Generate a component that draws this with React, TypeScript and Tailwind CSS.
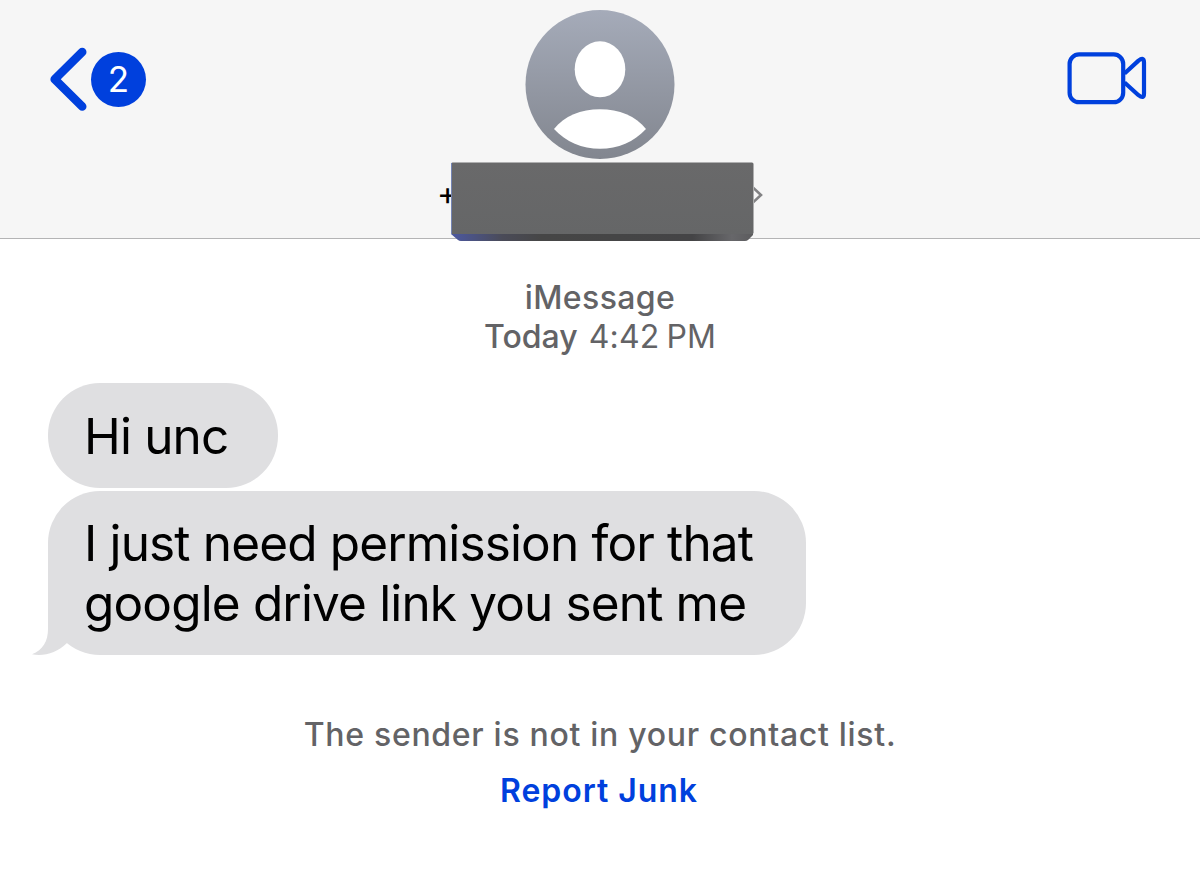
import type { ReactNode } from "react";

const BackIcon = () => (
    <svg width="38" height="64" viewBox="0 0 38 64" fill="none">
        <path
            d="M32.2 5 L4.7 32.2 L32.2 59.5"
            className="stroke-[#0040dd]"
            strokeWidth="8.6"
            strokeLinecap="round"
            strokeLinejoin="round"
        />
    </svg>
);

const VideoIcon = () => (
    <svg width="82" height="54" viewBox="0 0 82 54" fill="none">
        <g className="stroke-[#0040dd]" strokeWidth="4.2" strokeLinejoin="round">
            <rect x="3.6" y="3.4" width="53.6" height="47.8" rx="9.5" />
            <path d="M58.5 22.5 L72.5 9.6 Q78 5.5 78 11.5 V42.5 Q78 48.5 72.5 44.2 L58.5 31.5" />
        </g>
    </svg>
);

const Avatar = () => (
    <svg width="150" height="150" viewBox="0 0 150 150">
        <defs>
            <linearGradient id="avatar" x1="0" y1="0" x2="0" y2="1">
                <stop offset="0" stopColor="#a5abb9" />
                <stop offset="1" stopColor="#82868f" />
            </linearGradient>
        </defs>
        <circle cx="75" cy="75.5" r="74.5" fill="url(#avatar)" />
        <ellipse cx="75" cy="60.3" rx="25.3" ry="28" fill="#fff" />
        <path
            d="M29 120 C39 107 56 100.2 75 100.2 C94 100.2 111 107 121 120 C109 133 93 139.8 75 139.8 C57 139.8 41 133 29 120 Z"
            fill="#fff"
        />
    </svg>
);

// grey bar that hides the phone number
const HiddenNumber = () => (
    <svg width="304" height="80" viewBox="0 0 304 80">
        <defs>
            <linearGradient id="face" x1="0" y1="0" x2="0" y2="1">
                <stop offset="0" stopColor="#69696a" />
                <stop offset="1" stopColor="#656667" />
            </linearGradient>
            <linearGradient id="edge" x1="0" y1="0" x2="1" y2="0">
                <stop offset="0" stopColor="#4c58a0" />
                <stop offset="0.17" stopColor="#4a4b58" />
                <stop offset="0.3" stopColor="#464646" />
                <stop offset="0.8" stopColor="#444446" />
                <stop offset="0.93" stopColor="#67676a" />
                <stop offset="1" stopColor="#5c5c5e" />
            </linearGradient>
            <linearGradient id="rim" x1="0" y1="0" x2="1" y2="0">
                <stop offset="0" stopColor="#7080b8" />
                <stop offset="0.2" stopColor="#626266" />
                <stop offset="1" stopColor="#5c5c5c" />
            </linearGradient>
        </defs>
        <path d="M1 70 H303 V73 L298 78 Q297 79 295 79 H11 Q9 79 8 78 L1 72 Z" fill="url(#edge)" />
        <rect x="1" y="0.5" width="302.5" height="71.5" rx="1.5" fill="url(#face)" />
        <path d="M1.5 1 H303" stroke="url(#rim)" />
        <path d="M1.5 1 V72" stroke="#7484b4" />
    </svg>
);

const Tail = () => (
    <svg
        className="absolute -left-4 bottom-0"
        width="52"
        height="60"
        viewBox="0 0 52 60"
    >
        <path d="M16 0 V34 C16 46 11 55 0 59.3 C12 61.5 25 58 35 48 L51 20 V0 Z" fill="#dfdfe1" />
    </svg>
);

interface BubbleProps {
    children: ReactNode;
    className: string;
    tail?: boolean;
}

const Bubble = ({ children, className, tail }: BubbleProps) => (
    <div
        className={`relative rounded-[52px] bg-[#dfdfe1] pl-9 text-[49.5px] leading-[60px] tracking-[-0.85px] whitespace-nowrap text-black ${className}`}
    >
        {tail && <Tail />}
        <div className="relative">{children}</div>
    </div>
);

const App = () => {
    return (
        <div className="flex h-[871px] w-[1200px] flex-col overflow-hidden bg-white font-['Inter',sans-serif]">
            <header className="flex h-[239px] shrink-0 items-start justify-between border-b border-[#b4b4b5] bg-[#f6f6f6]">
                <button className="flex w-[437px] items-center gap-[3px] pt-[47px] pl-[50px]">
                    <BackIcon />
                    <span className="flex size-[55px] items-center justify-center rounded-full bg-[#0040dd] text-[35px] text-white">
                        2
                    </span>
                </button>
                <div className="flex w-[326px] flex-col items-center pt-[9px]">
                    <Avatar />
                    <div className="mt-[3px] flex items-start">
                        <span className="mt-[12px] -mr-[7px] w-[20px] text-[32px] leading-10 text-black">
                            +
                        </span>
                        <HiddenNumber />
                        <svg className="mt-[24px]" width="9" height="18" viewBox="0 0 9 18" fill="none">
                            <path d="M-1 1.5 L7 9 L-1 16.5" stroke="#828284" strokeWidth="2.6" />
                        </svg>
                    </div>
                </div>
                <div className="flex w-[437px] justify-end pt-[51px] pr-[52px]">
                    <VideoIcon />
                </div>
            </header>

            <main className="flex flex-col">
                <div className="mt-[39px] flex flex-col items-center text-[32px] leading-[39px] text-[#636366]">
                    <p className="font-medium tracking-[0.4px]">iMessage</p>
                    <p>
                        <span className="font-medium">Today</span>
                        <span className="ml-[11px] tracking-[0.2px]">4:42</span>
                        <span className="ml-[7px]">PM</span>
                    </p>
                </div>

                <div className="mt-[27px] flex flex-col items-start gap-[3px] pl-12">
                    <Bubble className="h-[105px] w-[229.5px] pt-[23px]">Hi unc</Bubble>
                    <Bubble className="h-[164px] w-[757.5px] pt-[22px]" tail>
                        <p>I just need permission for that</p>
                        <p>google drive link you sent me</p>
                    </Bubble>
                </div>

                <div className="mt-[60px] flex flex-col items-center text-[32px] leading-[40px]">
                    <p className="font-medium tracking-[0.7px] text-[#636366]">
                        The sender is not in your contact list.
                    </p>
                    <button className="mt-4 mr-[2px] font-semibold tracking-[0.95px] text-[#0040dd]">
                        Report Junk
                    </button>
                </div>
            </main>
        </div>
    );
};

export default App;
